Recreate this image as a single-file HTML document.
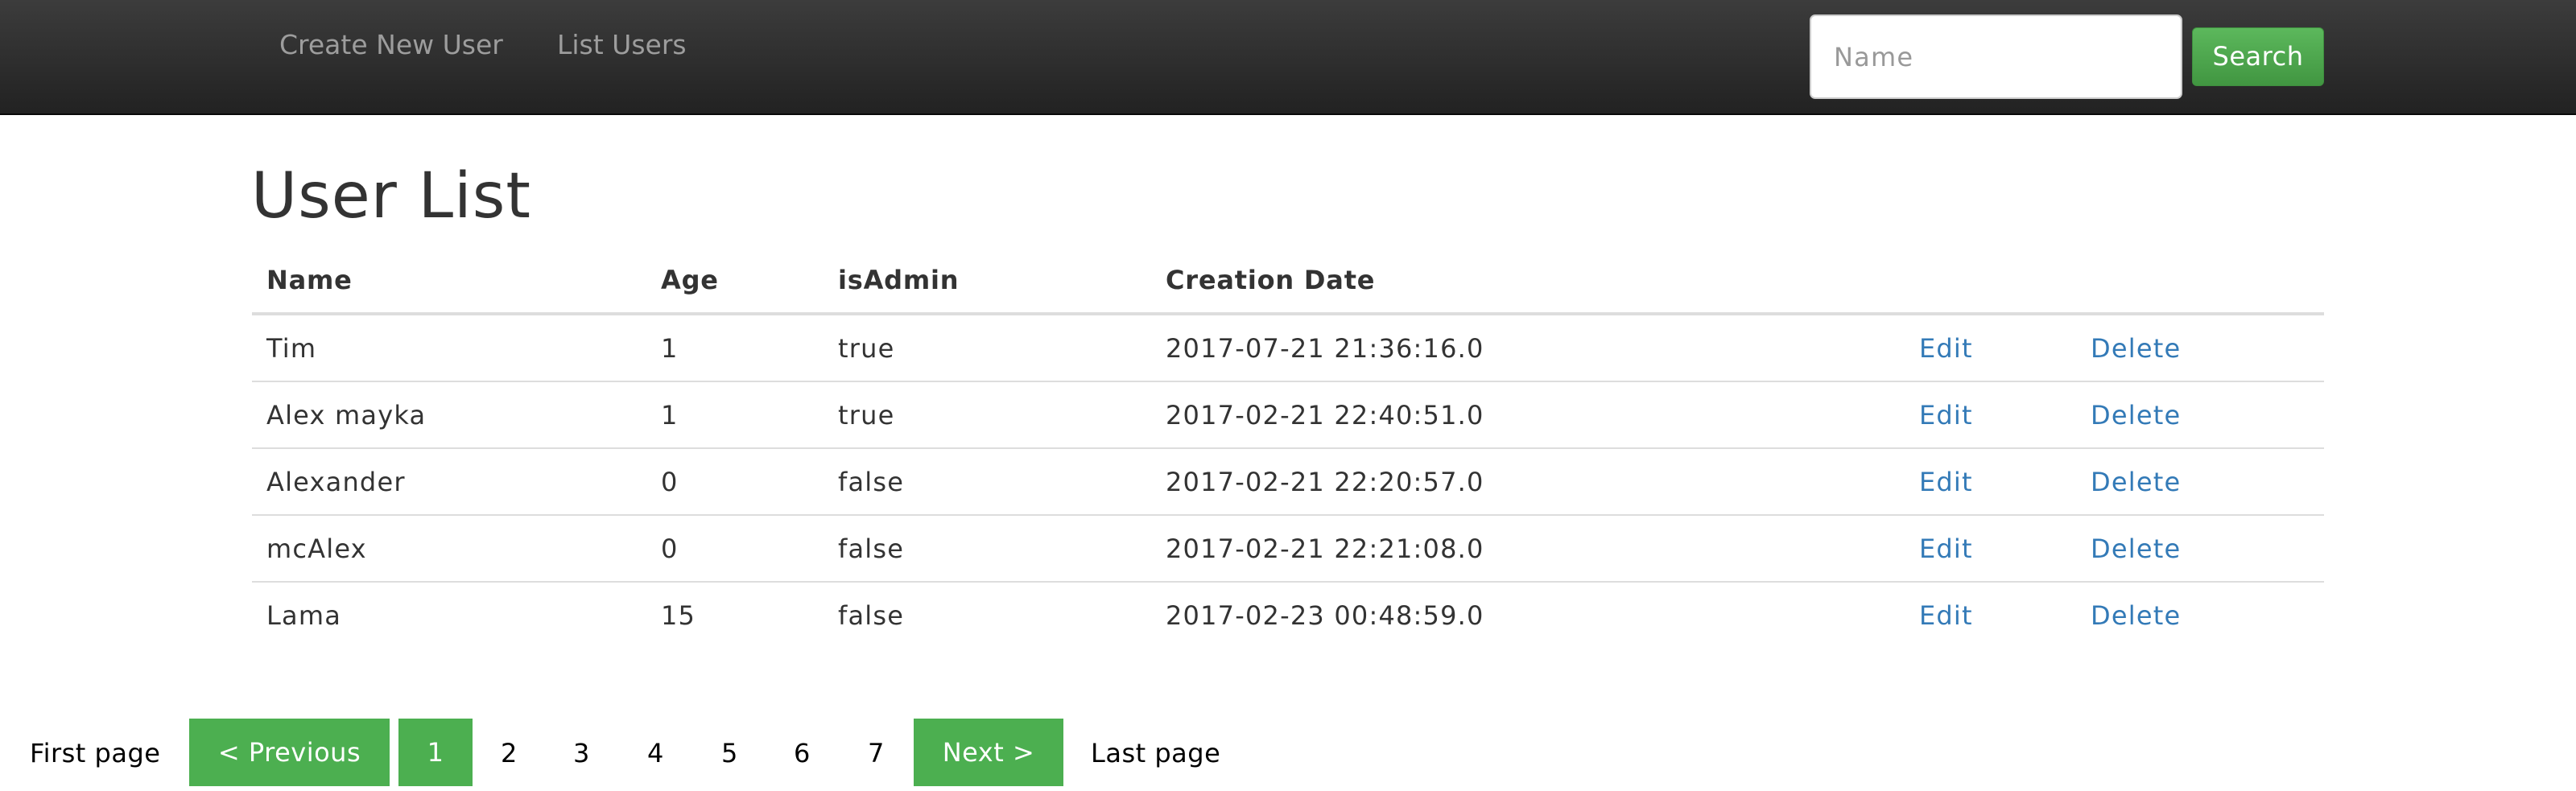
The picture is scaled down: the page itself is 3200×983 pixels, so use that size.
<!DOCTYPE html>
<html><head><meta charset="utf-8"><style>
*{margin:0;padding:0;box-sizing:border-box}
body{width:3200px;height:983px;background:#fff;font-family:"DejaVu Sans","Liberation Sans",sans-serif;color:#333;position:relative;overflow:hidden;font-size:32px;letter-spacing:1.2px}
.nav{position:absolute;left:0;top:0;width:3200px;height:143px;background:linear-gradient(#3c3c3c,#222);border-bottom:2px solid #080808}
.a{position:absolute;white-space:nowrap;line-height:1}
.nl{color:#9d9d9d;font-size:33px;top:39px;letter-spacing:0}
.inp{position:absolute;left:2248px;top:18px;width:463px;height:105px;background:#fff;border:2px solid #ccc;border-radius:7px}
.btn{position:absolute;left:2723px;top:34px;width:164px;height:73px;background:linear-gradient(#5cb85c,#419641);border:1px solid #3e8f3e;border-radius:6px;color:#fff;font-size:32px;text-align:center;line-height:71px;letter-spacing:0.5px}
.h{font-size:78px;top:205px;left:312px;color:#333;letter-spacing:1px}
.th{font-weight:bold;top:332px;letter-spacing:0.8px}
.ln{position:absolute;left:313px;width:2574px;background:#ddd}
.lk{color:#337ab7}
.g{position:absolute;background:#4caf50;color:#fff;top:893px;height:84px;line-height:84px;text-align:center;font-size:32px;letter-spacing:0.5px}
.p{color:#000;top:920px;letter-spacing:0.5px}
</style></head><body>
<div class="nav"></div>
<div class="a nl" style="left:347px">Create New User</div>
<div class="a nl" style="left:692px">List Users</div>
<div class="inp"></div>
<div class="a" style="left:2278px;top:55px;color:#999;font-size:32px">Name</div>
<div class="btn">Search</div>

<div class="a h">User List</div>
<div class="a th" style="left:331px">Name</div>
<div class="a th" style="left:821px">Age</div>
<div class="a th" style="left:1041px">isAdmin</div>
<div class="a th" style="left:1448px">Creation Date</div>
<div class="ln" style="top:388px;height:4px"></div>
<div class="ln" style="top:473px;height:2px"></div>
<div class="ln" style="top:556px;height:2px"></div>
<div class="ln" style="top:639px;height:2px"></div>
<div class="ln" style="top:722px;height:2px"></div>

<div class="a" style="left:331px;top:417px">Tim</div>
<div class="a" style="left:821px;top:417px">1</div>
<div class="a" style="left:1041px;top:417px">true</div>
<div class="a" style="left:1448px;top:417px">2017-07-21 21:36:16.0</div>
<div class="a lk" style="left:2384px;top:417px">Edit</div>
<div class="a lk" style="left:2597px;top:417px">Delete</div>

<div class="a" style="left:331px;top:500px">Alex mayka</div>
<div class="a" style="left:821px;top:500px">1</div>
<div class="a" style="left:1041px;top:500px">true</div>
<div class="a" style="left:1448px;top:500px">2017-02-21 22:40:51.0</div>
<div class="a lk" style="left:2384px;top:500px">Edit</div>
<div class="a lk" style="left:2597px;top:500px">Delete</div>

<div class="a" style="left:331px;top:583px">Alexander</div>
<div class="a" style="left:821px;top:583px">0</div>
<div class="a" style="left:1041px;top:583px">false</div>
<div class="a" style="left:1448px;top:583px">2017-02-21 22:20:57.0</div>
<div class="a lk" style="left:2384px;top:583px">Edit</div>
<div class="a lk" style="left:2597px;top:583px">Delete</div>

<div class="a" style="left:331px;top:666px">mcAlex</div>
<div class="a" style="left:821px;top:666px">0</div>
<div class="a" style="left:1041px;top:666px">false</div>
<div class="a" style="left:1448px;top:666px">2017-02-21 22:21:08.0</div>
<div class="a lk" style="left:2384px;top:666px">Edit</div>
<div class="a lk" style="left:2597px;top:666px">Delete</div>

<div class="a" style="left:331px;top:749px">Lama</div>
<div class="a" style="left:821px;top:749px">15</div>
<div class="a" style="left:1041px;top:749px">false</div>
<div class="a" style="left:1448px;top:749px">2017-02-23 00:48:59.0</div>
<div class="a lk" style="left:2384px;top:749px">Edit</div>
<div class="a lk" style="left:2597px;top:749px">Delete</div>

<div class="a p" style="left:37px">First page</div>
<div class="g" style="left:235px;width:249px">&lt; Previous</div>
<div class="g" style="left:495px;width:92px">1</div>
<div class="a p" style="left:622px">2</div>
<div class="a p" style="left:712px">3</div>
<div class="a p" style="left:804px">4</div>
<div class="a p" style="left:896px">5</div>
<div class="a p" style="left:986px">6</div>
<div class="a p" style="left:1078px">7</div>
<div class="g" style="left:1135px;width:186px">Next &gt;</div>
<div class="a p" style="left:1355px">Last page</div>
</body></html>
